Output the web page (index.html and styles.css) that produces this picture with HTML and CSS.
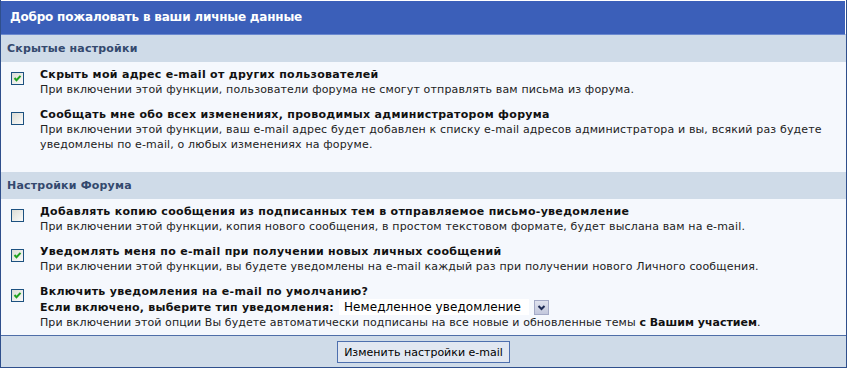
FILE: index.html
```html
<!DOCTYPE html>
<html lang="ru">
<head>
  <meta charset="UTF-8" />
  <title>Личные данные</title>
  <link rel="stylesheet" href="styles.css">
</head>
<body>

  <form class="panel" id="emailForm">
    <div class="panel-title">Добро пожаловать в ваши личные данные</div>

    <div class="section-title">Скрытые настройки</div>
    <div class="section section-hidden">
      <label class="option">
        <span class="check"><svg viewBox="0 0 11 11" width="11" height="11"><path d="M2.5 5 L4.5 7.2 L8.5 2.8" /></svg></span>
        <span class="option-text">
          <span class="option-name">Скрыть мой адрес e-mail от других пользователей</span>
          <span class="option-desc">При включении этой функции, пользователи форума не смогут отправлять вам письма из форума.</span>
        </span>
      </label>
      <label class="option">
        <span class="check off"><svg viewBox="0 0 11 11" width="11" height="11"><path d="M2.5 5 L4.5 7.2 L8.5 2.8" /></svg></span>
        <span class="option-text">
          <span class="option-name">Сообщать мне обо всех изменениях, проводимых администратором форума</span>
          <span class="option-desc">При включении этой функции, ваш e-mail адрес будет добавлен к списку e-mail адресов администратора и вы, всякий раз будете уведомлены по e-mail, о любых изменениях на форуме.</span>
        </span>
      </label>
    </div>

    <div class="section-title">Настройки Форума</div>
    <div class="section">
      <label class="option">
        <span class="check off"><svg viewBox="0 0 11 11" width="11" height="11"><path d="M2.5 5 L4.5 7.2 L8.5 2.8" /></svg></span>
        <span class="option-text">
          <span class="option-name">Добавлять копию сообщения из подписанных тем в отправляемое письмо-уведомление</span>
          <span class="option-desc">При включении этой функции, копия нового сообщения, в простом текстовом формате, будет выслана вам на e-mail.</span>
        </span>
      </label>
      <label class="option">
        <span class="check"><svg viewBox="0 0 11 11" width="11" height="11"><path d="M2.5 5 L4.5 7.2 L8.5 2.8" /></svg></span>
        <span class="option-text">
          <span class="option-name">Уведомлять меня по e-mail при получении новых личных сообщений</span>
          <span class="option-desc">При включении этой функции, вы будете уведомлены на e-mail каждый раз при получении нового Личного сообщения.</span>
        </span>
      </label>
      <div class="option">
        <span class="check"><svg viewBox="0 0 11 11" width="11" height="11"><path d="M2.5 5 L4.5 7.2 L8.5 2.8" /></svg></span>
        <span class="option-text">
          <span class="option-name">Включить уведомления на e-mail по умолчанию?</span>
          <span class="notify-row">
            <b>Если включено, выберите тип уведомления:</b>
            <span class="select">
              <span class="select-value">Немедленное уведомление</span>
              <span class="select-arrow"><svg viewBox="0 0 15 15" width="15" height="15"><path d="M4.5 6 L7.5 9 L10.5 6" /></svg></span>
            </span>
          </span>
          <span class="option-desc tight">При включении этой опции Вы будете автоматически подписаны на все новые и обновленные темы <b>с Вашим участием</b>.</span>
        </span>
      </div>
    </div>

    <div class="panel-footer">
      <button type="submit" class="btn">Изменить настройки e-mail</button>
    </div>
  </form>

</body>
</html>
```

FILE: styles.css
```css
body {
  margin: 0;
  font-family: "DejaVu Sans", Verdana, sans-serif;
  font-size: 11px;
  letter-spacing: 0.15px;
  background: #fff;
}
b {
  letter-spacing: 0.22px;
}
.panel {
  width: 845px;
  margin: 0;
  border: 1px solid #2f4f8c;
  border-top: none;
}
.panel-title {
  height: 33px;
  line-height: 33px;
  padding-left: 9px;
  background: #3b5fb9;
  color: #fff;
  font-size: 12px;
  font-weight: bold;
  letter-spacing: -0.2px;
  border-top: 1px solid #fff;
  border-right: 1px solid #fff;
  border-bottom: 1px solid #6b89cf;
}
.section-title {
  height: 27px;
  line-height: 27px;
  padding-left: 6px;
  background: #cfdbe8;
  color: #34496e;
  font-weight: bold;
  letter-spacing: 0.2px;
}
.section {
  background: #f5f8fd;
}
.section-hidden {
  padding-bottom: 15px;
}
.option {
  display: flex;
  align-items: flex-start;
  padding: 5px 10px;
  line-height: 15px;
}
.check {
  flex: none;
  width: 11px;
  height: 11px;
  margin: 5px 16px 0 0;
  border: 1px solid #1c5180;
  background: linear-gradient(135deg, #dcdcd5, #fbfbf9);
}
.check svg {
  display: block;
}
.check path {
  fill: none;
  stroke: #21a121;
  stroke-width: 2;
}
.check.off svg {
  display: none;
}
.option-text {
  display: block;
}
.option-name {
  display: block;
  font-weight: bold;
  letter-spacing: 0.3px;
  color: #111;
}
.option-desc {
  display: block;
  color: #222;
}
.option-desc.tight {
  letter-spacing: 0.09px;
}
.option-desc b {
  letter-spacing: 0;
  color: #111;
}
.notify-row {
  display: flex;
  align-items: center;
  height: 16px;
  color: #111;
}
.select {
  display: flex;
  align-items: center;
  margin-left: 5px;
}
.select-value {
  width: 185px;
  height: 16px;
  line-height: 16px;
  padding-left: 5px;
  background: #fff;
  font-size: 12px;
  letter-spacing: 0.1px;
  white-space: nowrap;
  overflow: hidden;
  color: #000;
}
.select-arrow {
  width: 15px;
  height: 15px;
  margin-left: 5px;
  box-sizing: border-box;
  background: linear-gradient(#dfe2ee, #c2c7dc);
  border: 1px solid #a3a9c6;
}
.select-arrow svg {
  display: block;
  margin: -1px;
}
.select-arrow path {
  fill: none;
  stroke: #1e2b55;
  stroke-width: 2;
}
.panel-footer {
  padding: 5px 0 4px;
  text-align: center;
  background: #cfdbe8;
  border-top: 1px solid #4f6ea8;
}
.btn {
  height: 22px;
  padding: 0 6px;
  font-family: "DejaVu Sans", Verdana, sans-serif;
  font-size: 11px;
  letter-spacing: 0;
  color: #000;
  background: #e1e7f1;
  border: 1px solid #4d6fae;
  cursor: pointer;
}
```
